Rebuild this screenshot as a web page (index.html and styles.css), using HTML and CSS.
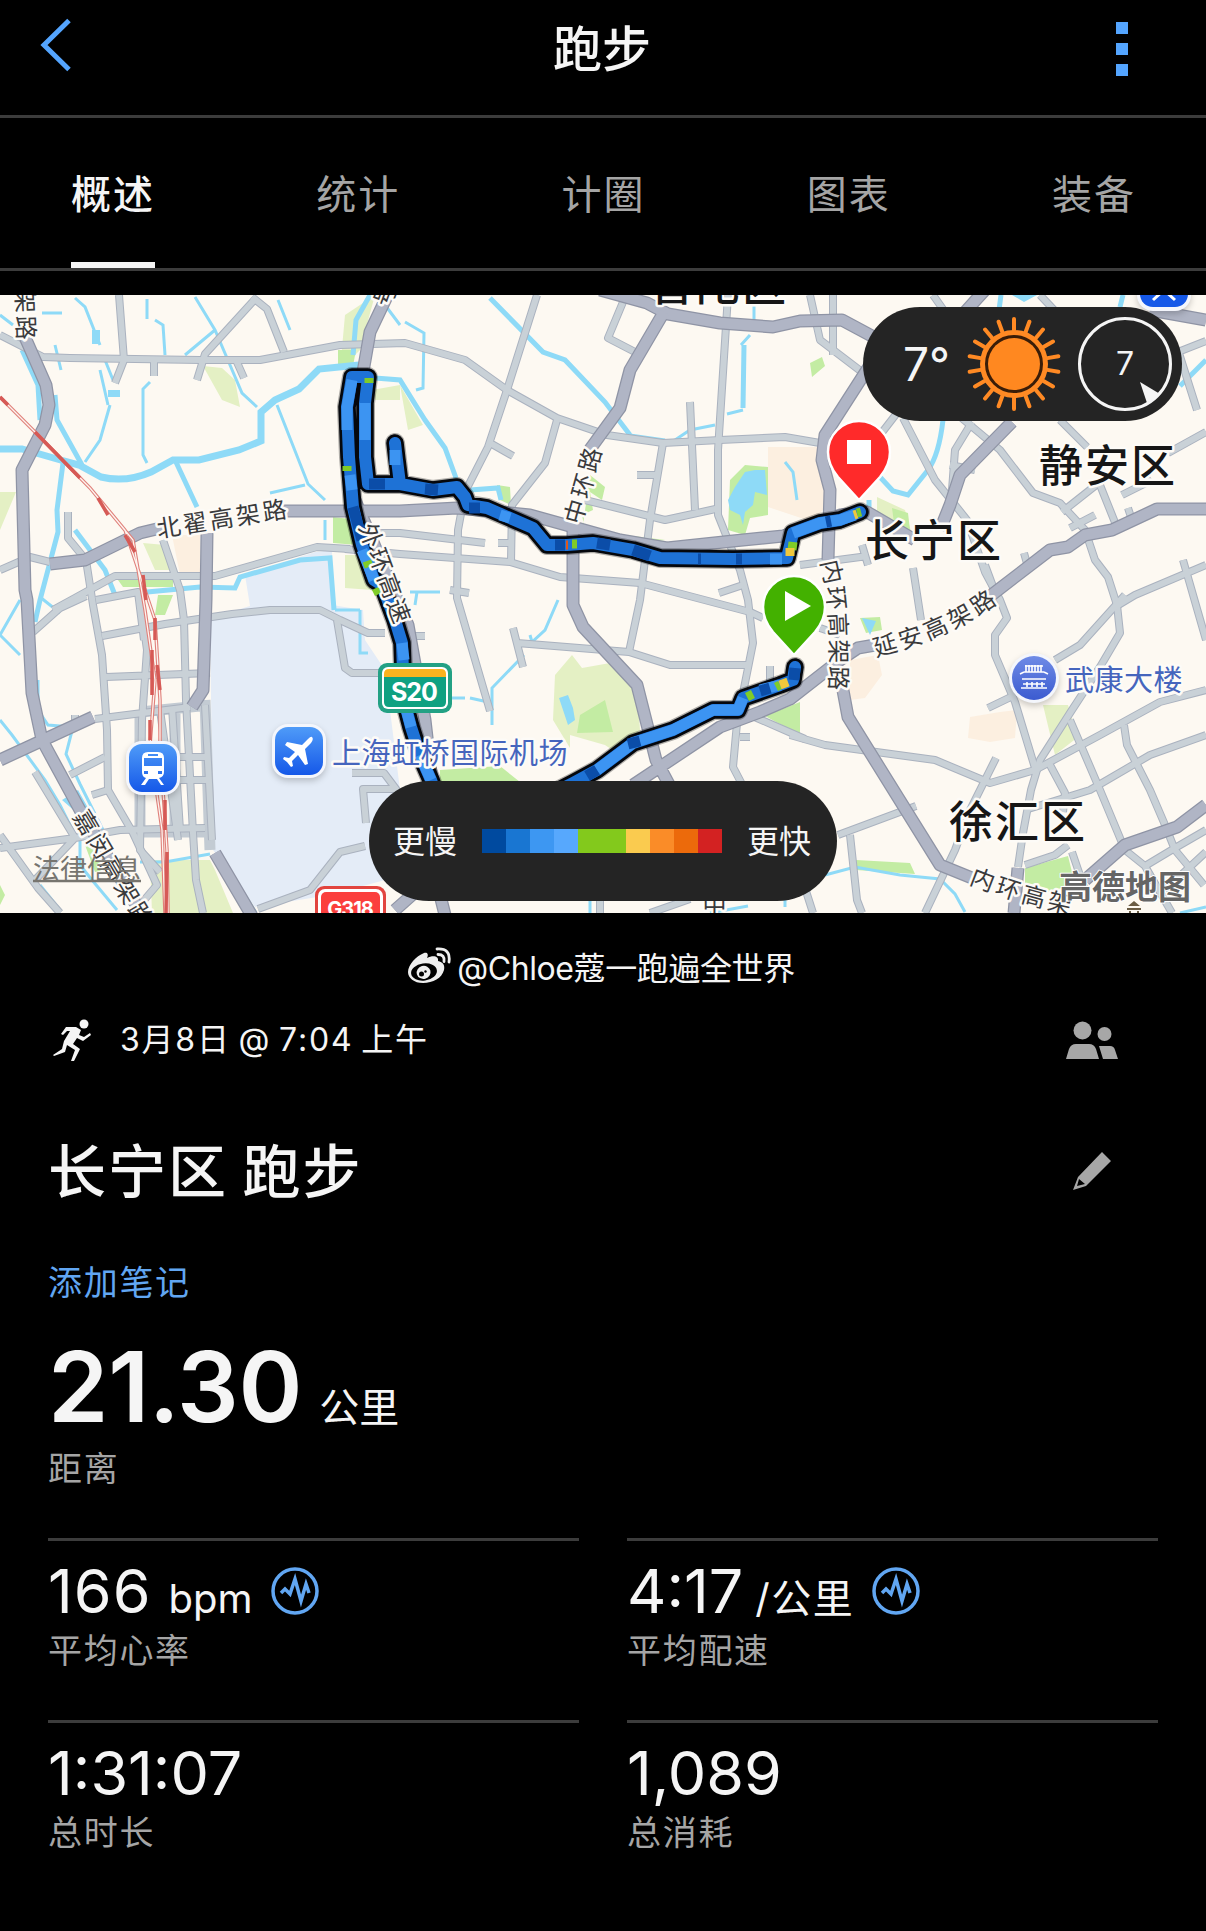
FILE: index.html
```html
<!DOCTYPE html>
<html lang="zh-CN">
<head>
    <meta charset="UTF-8">
    <meta name="viewport" content="width=device-width, initial-scale=1.0">
    <title>跑步</title>
    <link rel="stylesheet" href="styles.css">
</head>
<body>
    <header class="header">
        <svg class="back" width="32" height="54" viewBox="0 0 32 54"><path d="M29 2.500 4 27l25 24.500"/></svg>
        <h1>跑步</h1>
        <div class="more"><i></i><i></i><i></i></div>
    </header>

    <nav class="tabs">
        <a class="tab active">概述</a>
        <a class="tab">统计</a>
        <a class="tab">计圈</a>
        <a class="tab">图表</a>
        <a class="tab">装备</a>
    </nav>

    <section class="map">
        <svg class="map-canvas" viewBox="0 295 1206 618" width="1206" height="618">
            <defs>
                <linearGradient id="poi-blue" x1="0" y1="0" x2="0" y2="1">
                    <stop offset="0" stop-color="#4f9bf8"/>
                    <stop offset="1" stop-color="#1558e8"/>
                </linearGradient>
                <linearGradient id="poi-violet" x1="0" y1="0" x2="0" y2="1">
                    <stop offset="0" stop-color="#6f8be6"/>
                    <stop offset="1" stop-color="#3b5bd0"/>
                </linearGradient>
                <g id="minor-roads">
                    <path d="M0 335 43 357 70 358 200 360 260 360 340 345 405 343 465 360 507 390 557 418 607 435 663 443 720 440 785 437 820 443"/>
                    <path d="M119 295 124 360 115 383M154 360v16M257 297 205 354 197 380M252 297 267 309 284 352M236 360 244 378"/>
                    <path d="M68 512V538L86 560 93 605 102 655 107 730 108 790 133 833 157 885 140 905M0 570 30 557 50 562"/>
                    <path d="M53 610 75 598 115 576H215L317 547 350 549M163 540 180 590 184 620 186 700 193 833 196 880 203 913M96 600 138 592 144 640"/>
                    <path d="M33 632 60 608 86 596M102 636 165 624 232 614 270 610H320L340 620 368 633 385 633"/>
                    <path d="M140 600 147 650 142 720 140 850 160 872M106 677 210 673M95 719 190 707M337 620 345 668 352 673H385"/>
                    <path d="M0 848 75 838 120 830 205 828M35 772 75 838 35 880M0 835 38 888 60 913M70 775 105 757M92 795 108 790M75 715v12"/>
                    <path d="M160 710 178 840M172 707 180 830M205 705 212 840M180 757h30M180 780h30M258 909 310 890 340 852 365 846M352 773h32l12 16h-33l3 34"/>
                    <path d="M360 533H400L485 543M498 543h12M345 549 400 554 510 562 560 577 640 583 750 612 763 618"/>
                    <path d="M537 295 507 390 488 447 465 492 458 530 457 598 490 711M490 443 513 456M557 420 545 463 512 505 511 562"/>
                    <path d="M623 302 608 338 635 352M728 295 718 450V515L740 570 748 600 753 643 737 723 733 767 745 790M690 402 695 510"/>
                    <path d="M663 443 650 520 640 600 629 652M585 500 665 520 720 508M637 475h20M450 590 469 593M719 593 743 585"/>
                    <path d="M513 628 523 667M517 643 629 652 670 665H748M770 666v24M740 737h10M750 715 805 739M600 900v13M650 913 690 899M412 636h13"/>
                    <path d="M810 295 820 340 862 372M833 295V355M933 295 945 312M1040 295 1056 312M897 413 880 435M903 418 935 480 967 520 985 572 1000 600 1007 618 995 635V655L1015 702 1035 768"/>
                    <path d="M972 422 955 450 952 490M958 415 1000 450 1033 493 1060 503 1085 530 1095 560 1108 577 1117 605 1120 633 1100 667 1070 713 1040 760 1031 790 1023 833 1018 867"/>
                    <path d="M1060 420 1087 447M1125 595 1080 645 1055 660M1115 607 1135 595 1206 565M1183 560 1206 640M1168 453 1206 432M1062 512 1105 478M1100 485 1116 525M1122 495 1152 480M1070 528 1095 515M1128 508l4 12"/>
                    <path d="M1178 350 1197 410M1178 352 1206 341M800 565 868 556M913 568 921 620M1024 553l4 14M950 465 975 470M862 545 868 565M985 565 998 600"/>
                    <path d="M790 735 825 745 935 760 990 783 1035 770 1100 735 1160 702 1206 690M996 758 980 790 970 810 955 850 925 913M1050 765 1065 793 1063 812"/>
                    <path d="M1025 810 1090 790 1150 755 1206 735M1070 720 1100 790 1125 850 1145 866M1124 725 1127 745 1150 790 1165 825 1175 850 1204 885M1145 866 1175 848 1206 830M1206 852 1165 890M1145 866 1172 913"/>
                    <path d="M1025 865 1055 855 1068 845M1072 852 1085 890M838 835 916 806M850 835 857 900 862 913M805 888 813 913M988 708 1015 695M820 628 840 635"/>
                </g>
                <g id="major-roads">
                    <path d="M24 335 46 385 49 405 45 425 22 470 25 590 27 600 32 693 42 740 80 810 148 925M0 760 93 717"/>
                    <path d="M50 564 85 560 140 533 165 527M280 511H400L457 508 530 515 620 540 667 548 733 541 783 536 840 515 867 512 915 540M207 533 206 600 203 690 192 707"/>
                    <path d="M390 290 370 332 363 372M355 500 385 570 408 625 425 720 433 790M600 290 647 303 668 314 720 323 773 327 800 321 842 320 870 335 905 358"/>
                    <path d="M664 312 630 370 620 408 588 452M573 522V605L583 627 637 685 656 760 672 790M633 785 720 727 760 712 790 699 840 660 858 648 875 645M985 600 1050 550 1068 547 1085 535 1112 530 1157 509 1206 509"/>
                    <path d="M985 290 965 312M870 365 825 435 822 460 830 490 828 560M842 685 848 717 940 865 972 878M1018 868 1014 913M1085 880 1125 845 1177 827 1206 805M1012 422 960 475 950 505 940 530M215 853 252 916M1150 310 1206 320M395 910 412 895M440 895 445 915"/>
                </g>
                <path id="route-line" d="M438 800 431 780 420 755 411 727 404 700 402 643 395 620 382 585 374 580 362 545 353 507 349 457 347 407 352 377 368 377 365 403 365 457 368 484 400 484 433 490 457 487 465 497 468 505 487 508 533 528 547 545 567 545 593 543 633 550 660 558 733 559 787 558 793 533 820 523 840 520 860 512M400 484 397 460 395 443M795 667 793 680 780 685 743 698 738 710 713 710 673 730 633 743 597 770 573 783 540 800"/>
                <path id="rail-lines" d="M0 397 35 432 90 488 133 540 145 610 155 680 150 745 162 830 165 913M35 432 90 488 125 530 140 575 155 620 160 700 160 745 167 850 168 913"/>
                <path id="label-zhonghuan" d="M572 523 594 445"/>
                <path id="label-waihuan" d="M367 524 410 640"/>
                <path id="label-neihuan" d="M829 560Q842 600 838 700"/>
                <path id="label-yanan" d="M873 648Q950 630 1002 588"/>
                <path id="label-jiamin" d="M80 812 153 935"/>
                <path id="label-neihuan-south" d="M972 875Q1020 895 1080 907"/>
                <path id="label-left" d="M24 260 27 352"/>
            </defs>

            <rect class="land" y="295" width="1206" height="618"/>

            <!-- 机场与街区 -->
            <path class="airport" d="M245 575 315 552 332 550 332 605 363 610 365 640 385 670 400 790 385 880 330 895 255 907 213 850 210 618 250 606Z"/>
            <path class="sand" d="M172 535h28v40h-20ZM768 447h55l10 50-20 25-45-15ZM970 717 1000 712 1017 710 1015 738 990 742 968 738ZM850 660 878 655 882 675 865 698 850 700Z"/>
            <path class="meadow" d="M345 315 375 295 360 350 340 370ZM203 366 222 368 235 380 240 407 222 400ZM0 492 16 492 0 530ZM143 543 165 545 174 570 155 570ZM345 555 365 555 372 590 345 588ZM400 385 423 425 408 430ZM372 390 400 385V400H375ZM555 675 572 655 582 668 610 663 637 690 640 730 620 755 605 745 570 735 570 748 553 720ZM877 497 905 510 912 535 877 530ZM1043 705 1068 705 1078 737 1055 755ZM150 860 210 860 215 870 233 913H152Z"/>
            <path class="grass" d="M338 350h18l-3 16h-15ZM333 517 350 519 357 545 333 543ZM118 580h55v7h-50ZM158 595h15l-8 20h-10ZM590 475 605 487 602 500 590 492 593 510 582 515 585 530 665 540 640 543 582 532ZM730 480 745 465 768 467 768 515 750 518 745 535 728 530ZM580 715 605 700 613 732 577 733ZM765 716 800 702V735ZM810 363 822 357 825 366 812 377ZM1025 868 1068 856 1075 884 1048 892 1025 883ZM440 770 500 766 520 782H440ZM856 860 910 863 915 874 856 870ZM892 508 908 513 910 530 895 530ZM497 485 510 487 511 505 500 500ZM0 885 5 895 0 905ZM85 845 92 840 103 870 95 872ZM860 618 880 617 882 630 866 633Z"/>

            <!-- 河流 -->
            <g class="water">
                <path class="w8" d="M0 449h22l35 10 22 6 22 12q25 6 50-5l22-12h26l40-10 22-9V412l14-12 24-11 20-20 40-4"/>
                <path class="w5" d="M175 460 197 507M63 463 57 510 58 532 40 600 35 622M55 395 57 420 82 465M75 530 105 570 115 595 200 587 235 588 240 577 300 560 330 558 334 610M22 350 38 385 40 420M370 295 356 320 353 355M375 378 400 380 425 420 445 448 456 478"/>
                <path class="w3" d="M75 298 85 307 100 345M147 299v20M155 320l8 5 2 30M42 313h20M0 315 13 325M195 297 215 330 230 365 242 393 257 407M215 330 185 355M278 300 290 330M110 405 100 440 85 462M150 382l-7 7v66l4 8M105 360l8 20M277 405 308 484 325 500M270 493l35-8M55 345l6 25M325 520v20M40 597 60 613M0 635 20 655M100 370l8 35M385 305l15 20"/>
                <path class="w5" d="M490 298 543 352 565 360 605 402 630 435M470 490l28-2 3 12M744 345 743 408M1206 360 1180 386M943 420q-4 35-15 50l-20 25-15-4-13-14M869 500v12M1001 295l-2 15M1123 295l-3 12M220 857 255 913"/>
                <path class="w3" d="M405 322 424 333 423 388 416 390M750 335 741 345M743 410 727 414M715 425 690 430 675 440M754 300v25M630 435 665 440M558 600 545 630 532 642 530 635M524 655 492 688V725M450 698h15M470 698l18 4M410 592h30M417 592 415 605M360 610h-25M360 610v43h8M785 462l8 10 4 28M20 600 0 635M0 720 12 735 45 780 60 805 75 835M38 680v30l10 15 25 2-7 27 14 30 25 50M40 885 60 910M80 840v25l12 15 25 30M140 862h25l45-8M825 875l30-8 45 8 40 4 15 15 10 18M590 900v13M710 913l38-7M785 895v12M1180 913l26-6"/>
                <path class="lake" d="M728 500 735 487 745 472 755 470 765 470 767 495 755 492 753 505 745 512 743 525 740 515 730 510ZM559 698 568 695 573 708 575 720 568 725ZM92 330h8v14h-8ZM108 390h12v7h-12ZM862 618 876 621 870 635ZM1012 295h25l-13 7ZM62 800 78 790 92 815 85 820Z"/>
            </g>

            <path class="plaza" d="M140 710v125M175 712v118M205 700l5 150M140 712l60-6M135 832h75"/>
            <use href="#minor-roads" class="road minor-edge"/>
            <use href="#minor-roads" class="road minor"/>
            <use href="#major-roads" class="road major-edge"/>
            <use href="#major-roads" class="road major"/>

            <!-- 铁路 -->
            <use href="#rail-lines" class="rail"/>
            <use href="#rail-lines" class="rail-inner"/>
            <path class="rail-dash" d="M0 397 8 405M35 432 80 478M98 498 108 515M125 535 135 552M143 575 146 600M155 618V640M157 665 160 690M152 650 152 695M150 720V740M165 800V830M167 852 166 913"/>

            <!-- 轨迹 -->
            <use href="#route-line" class="route-shadow"/>
            <use href="#route-line" class="route-edge"/>
            <use href="#route-line" class="route"/>
            <g class="route-light">
                <path d="M431 780 420 755M402 643 404 660M347 430 347 407 352 380M365 403V440M374 580 362 550M395 465V450M350 475 352 490M411 727 405 705M500 515 510 518M793 533 820 523 840 520 855 515M770 559h12M743 698 738 710 713 710 673 730 633 743 597 770M760 690 780 685"/>
            </g>
            <g class="route-dark">
                <path d="M369 484 385 484M425 489 438 490M469 508 480 508M362 540 353 507M633 550 650 556M555 545 565 545M597 543 610 545M698 559 701 559M736 559 742 559M826 522 831 521M760 691 770 688M795 668 794 680M587 776 597 770M628 744 640 741"/>
            </g>
            <path class="seg-green" d="M347 466v5M369 378v5M367 561l2 6M376 588l3 6M747 697 753 694M776 687 780 685M857 513 861 512M572 544 577 544M792 550 793 542"/>
            <path class="seg-yellow" d="M780 685 788 682M790 556V548M854 515l3-1"/>
            <path class="seg-red" d="M566 545h2"/>

            <!-- 道路名 -->
            <g class="road-name">
                <text x="223" y="519" transform="rotate(-9 222 519)" text-anchor="middle">北翟高架路</text>
                <text><textPath href="#label-zhonghuan">中环路</textPath></text>
                <text><textPath href="#label-waihuan">外环高速</textPath></text>
                <text><textPath href="#label-neihuan">内环高架路</textPath></text>
                <text><textPath href="#label-yanan">延安高架路</textPath></text>
                <text><textPath href="#label-jiamin">嘉闵高架路</textPath></text>
                <text><textPath href="#label-neihuan-south">内环高架</textPath></text>
                <text><textPath href="#label-left" startOffset="29">架路</textPath></text>
                <text x="386" y="293" transform="rotate(-70 386 293)" text-anchor="middle">号</text>
                <text x="716" y="905" text-anchor="middle">中</text>
            </g>
            <g class="district">
                <text x="650" y="285">普陀区</text>
                <text x="1039" y="466">静安区</text>
                <text x="865" y="541">长宁区</text>
                <text x="949" y="822">徐汇区</text>
            </g>

            <!-- 公路编号 -->
            <g class="shield">
                <rect x="378" y="663" width="74" height="50" rx="9" fill="#23a184"/>
                <rect x="382" y="667" width="66" height="42" rx="6" fill="#fff"/>
                <path d="M384 677v-3q0-5 5-5h52q5 0 5 5v3Z" fill="#fcb31f"/>
                <path d="M384 677h62v25q0 5-5 5h-52q-5 0-5-5Z" fill="#0fa181"/>
                <text x="414" y="692">S20</text>
                <rect x="315" y="886" width="71" height="50" rx="9" fill="#e2453f"/>
                <rect x="318" y="889" width="65" height="44" rx="7" fill="#fff"/>
                <rect x="321" y="892" width="59" height="40" rx="5" fill="#fb3f3d"/>
                <text x="350" y="909" class="small">G318</text>
            </g>

            <!-- 地点 -->
            <g class="poi">
                <rect x="126" y="741" width="54" height="54" rx="16" class="poi-edge"/>
                <rect x="129" y="744" width="48" height="48" rx="13" fill="url(#poi-blue)"/>
                <path fill="#fff" fill-rule="evenodd" d="M148 752h10q6 0 6 6v14q0 5-5 6l5 7h-3l-4-6h-8l-4 6h-4l5-7q-4-1-4-6v-14q0-6 6-6ZM148 754v2h10v-2ZM144 758v8h18v-8ZM144 771v3h4v-3ZM158 771v3h4v-3Z"/>
                <rect x="272" y="724" width="54" height="54" rx="16" class="poi-edge"/>
                <rect x="275" y="727" width="48" height="48" rx="13" fill="url(#poi-blue)"/>
                <path fill="#fff" d="M312 737q2 2-1 6l-6 6 3 15-3 1-7-10-6 6 1 5-2 1-4-5-4-3 1-2 5 1 6-6-10-7 2-3 15 3 6-6q3-3 4-2Z"/>
                <text x="332" y="753">上海虹桥国际机场</text>
                <circle cx="1034" cy="678" r="25" class="poi-edge"/>
                <circle cx="1034" cy="678" r="22" fill="url(#poi-violet)"/>
                <path fill="none" stroke="#fff" stroke-width="1.6" d="M1025 666h18M1024 672h20M1020 674l4-2M1048 674l-4-2M1022 679h24M1021 688h26M1026 665v7M1029 665v7M1032 665v7M1035 665v7M1038 665v7M1041 665v7M1027 682v5M1032 682v5M1037 682v5M1042 682v5M1023 684h22"/>
                <text x="1065" y="680">武康大楼</text>
                <rect x="1137" y="260" width="54" height="51" rx="16" class="poi-edge"/>
                <rect x="1140" y="260" width="48" height="47" rx="13" fill="#1558e8"/>
                <path fill="none" stroke="#fff" stroke-width="3" d="M1153 300 1164 290 1175 300"/>
                <path fill="#6b5d45" d="M1134 901l6 5h-12ZM1127 908h14v2h-14ZM1129 911h2v2h-2ZM1137 911h2v2h-2Z"/>
            </g>
            <g class="legal">
                <text x="33" y="869">法律信息</text>
                <path d="M33 881h108" stroke="#77756f" stroke-width="2.500"/>
                <text x="1059" y="887" class="amap">高德地图</text>
            </g>

            <!-- 起点与终点 -->
            <path class="pin" fill="#ff2a2a" d="M859 500 838 477C832 470 828 461 828 452a31 31 0 0 1 62 0c0 9-4 18-10 25Z"/>
            <rect x="847" y="440" width="24" height="24" fill="#fff"/>
            <path class="pin" fill="#43b100" d="M794 655 773 632C767 625 763 616 763 607a31 31 0 0 1 62 0c0 9-4 18-10 25Z"/>
            <path fill="#fff" d="M785 591v30l26-15Z"/>
        </svg>

        <div class="weather">
            <span class="temp">7°</span>
            <svg class="sun" width="94" height="94" viewBox="-47 -47 94 94">
                <circle r="31.500" fill="#3a1d08" stroke="#ff8a24" stroke-width="5"/>
                <circle r="26" fill="#ff8820"/>
                <g class="rays">
                    <path id="ray" d="M0-34V-45M0 34V45"/>
                    <use href="#ray" transform="rotate(20)"/>
                    <use href="#ray" transform="rotate(40)"/>
                    <use href="#ray" transform="rotate(60)"/>
                    <use href="#ray" transform="rotate(80)"/>
                    <use href="#ray" transform="rotate(100)"/>
                    <use href="#ray" transform="rotate(120)"/>
                    <use href="#ray" transform="rotate(140)"/>
                    <use href="#ray" transform="rotate(160)"/>
                </g>
            </svg>
            <div class="wind">
                <svg width="96" height="96" viewBox="-48 -48 96 96">
                    <circle r="45.500" fill="none" stroke="#f5f5f5" stroke-width="3"/>
                    <path d="M15 18 35 30 22 39Z" fill="#f5f5f5"/>
                </svg>
                <span>7</span>
            </div>
        </div>

        <div class="legend">
            <span>更慢</span>
            <div class="scale"><i class="s1"></i><i class="s2"></i><i class="s3"></i><i class="s4"></i><i class="s5"></i><i class="s5"></i><i class="s6"></i><i class="s7"></i><i class="s8"></i><i class="s9"></i></div>
            <span>更快</span>
        </div>
    </section>

    <main class="content">
        <div class="credit">
            <svg width="44" height="37" viewBox="0 0 44 37">
                <path fill="#eee" d="M16 6c3-1 5 1 3 5 6-3 12-2 11 3 5 1 7 4 6 9-2 8-11 13-21 13C6 36 0 31 0 25 0 18 8 9 16 6Z"/>
                <ellipse cx="16" cy="25" rx="13" ry="8.500" fill="#000" transform="rotate(-8 16 25)"/>
                <ellipse cx="15.500" cy="25.500" rx="7" ry="6.500" fill="#eee" transform="rotate(-15 15 25)"/>
                <circle cx="13.500" cy="27" r="2.500"/><circle cx="17.500" cy="24.500" r="1.200"/>
                <path fill="none" stroke="#eee" stroke-width="2.800" stroke-linecap="round" d="M29 2q14-1 12 13M30 7.500q7 0 6 7"/>
            </svg>
            <span>@Chloe蔻一跑遍全世界</span>
        </div>

        <div class="row meta">
            <svg width="40" height="42" viewBox="0 0 40 42">
                <circle cx="31" cy="5" r="4.500" fill="#f5f5f5"/>
                <path fill="#f5f5f5" d="M14 8h9l5 3-2 5 5 2 6-4 1 2-8 6-6-3-4 6 7 5-6 12h-3l4-11-8-5-2 7-11 4-1-1 9-6 2-8 6-10h-3l-4 4-2-1 5-7Z"/>
            </svg>
            <span class="date">3月8日 @ 7:04 上午</span>
            <svg class="right people" width="52" height="39" viewBox="0 0 52 39">
                <circle cx="16.500" cy="9.500" r="9"/><circle cx="38.500" cy="13" r="7"/>
                <path d="M0 38 3 28q2-5 7-5h13q5 0 7 5l3 10ZM33 25h11q4 0 5 4l3 9H37Z"/>
            </svg>
        </div>

        <div class="row title">
            <h2>长宁区 跑步</h2>
            <svg class="right" width="39" height="39" viewBox="0 0 39 39">
                <path fill="#a7a7a7" fill-rule="evenodd" d="M29 0 38 9 13 34 0 38 5 25ZM6 27 4 34 12 32Z"/>
            </svg>
        </div>

        <a class="note">添加笔记</a>

        <div class="distance">
            <div class="value"><b>21.30</b><span class="unit">公里</span></div>
            <div class="label">距离</div>
        </div>

        <div class="stats">
            <div class="stat">
                <div class="value"><span class="heart">166</span><span class="unit">bpm</span>
                    <svg class="wave" width="48" height="48" viewBox="0 0 48 48"><circle cx="24" cy="24" r="22"/><path d="M10 26l4-4 5 5 5-15 6 22 5-17 3 9"/></svg>
                </div>
                <div class="label">平均心率</div>
            </div>
            <div class="stat">
                <div class="value">4:17<span class="unit slash">/公里</span>
                    <svg class="wave" width="48" height="48" viewBox="0 0 48 48"><circle cx="24" cy="24" r="22"/><path d="M10 26l4-4 5 5 5-15 6 22 5-17 3 9"/></svg>
                </div>
                <div class="label">平均配速</div>
            </div>
            <div class="stat">
                <div class="value">1:31:07</div>
                <div class="label">总时长</div>
            </div>
            <div class="stat">
                <div class="value">1,089</div>
                <div class="label">总消耗</div>
            </div>
        </div>
    </main>
</body>
</html>
```

FILE: styles.css
```css
* {
    margin: 0;
    padding: 0;
    box-sizing: border-box;
}

body {
    width: 1206px;
    height: 1931px;
    overflow: hidden;
    background-color: #000;
    color: #f5f5f5;
    font-family: Inter, "Noto Sans CJK SC", sans-serif;
}

svg {
    display: block;
    flex: none;
}

/* 顶部 */
.header {
    display: flex;
    justify-content: space-between;
    align-items: flex-start;
    height: 118px;
    padding: 18px 78px 0 40px;
    border-bottom: 3px solid #3c3c3c;
}

.back path {
    fill: none;
    stroke: #54a5ff;
    stroke-width: 5;
}

.header h1 {
    padding-left: 16px;
    font-size: 49px;
    font-weight: 500;
    line-height: 64px;
}

.more {
    display: flex;
    flex-direction: column;
    gap: 9px;
    padding-top: 4px;
}

.more i {
    width: 12px;
    height: 12px;
    background-color: #54a5ff;
}

.tabs {
    display: flex;
    justify-content: space-between;
    height: 153px;
    padding: 0 70px 0 71px;
    border-bottom: 3px solid #3c3c3c;
}

.tab {
    height: 150px;
    font-size: 40px;
    line-height: 153px;
    letter-spacing: 2px;
    color: #a5a5a5;
}

.tab.active {
    color: #f5f5f5;
    font-weight: 500;
    border-bottom: 6px solid #f5f5f5;
}

/* 地图 */
.map {
    position: relative;
    height: 618px;
    margin-top: 24px;
    overflow: hidden;
}

.land { fill: #fdf9f2; }
.airport { fill: #e4ecf7; }
.sand { fill: #fcefe0; }
.meadow { fill: #e4f0c4; }
.grass { fill: #c3eca3; }

.water {
    fill: none;
    stroke: #8edaf7;
}

.water .lake {
    fill: #8edaf7;
    stroke: none;
}

.w8 { stroke-width: 7; }
.w5 { stroke-width: 5; }
.w3 { stroke-width: 3; }

.plaza {
    fill: none;
    stroke: #c3cbd3;
    stroke-width: 11;
}

.road {
    fill: none;
    stroke-linejoin: round;
}

.minor-edge { stroke: #aab2bf; stroke-width: 8; }
.minor { stroke: #c9d1d7; stroke-width: 6; }
.major-edge { stroke: #8f94a5; stroke-width: 13; }
.major { stroke: #b0b5c5; stroke-width: 10.5; }

.rail,
.rail-inner,
.rail-dash {
    fill: none;
    stroke: #e0807a;
    stroke-width: 3.5;
}

.rail-inner {
    stroke: #fdf4f0;
    stroke-width: 1.3;
}

.rail-dash {
    stroke: #d65a56;
}

.route-shadow,
.route-edge,
.route,
.route-light,
.route-dark {
    fill: none;
    stroke-linecap: round;
    stroke-linejoin: round;
}

.route-shadow { stroke: rgba(0, 0, 0, 0.3); stroke-width: 20; }
.route-edge { stroke: #05070c; stroke-width: 17.5; }
.route { stroke: #1e72d6; stroke-width: 12; }
.route-light { stroke: #3c94f2; stroke-width: 11; stroke-linecap: butt; }
.route-dark { stroke: #0b4da8; stroke-width: 11; stroke-linecap: butt; }
.seg-green { stroke: #80cc28; stroke-width: 9; }
.seg-yellow { stroke: #f0c83c; stroke-width: 9; }
.seg-red { stroke: #e0561c; stroke-width: 9; }

.map-canvas text {
    font-family: Inter, "Noto Sans CJK SC", sans-serif;
    dominant-baseline: central;
    paint-order: stroke;
    stroke: #fdfbf7;
    stroke-width: 5;
    stroke-linejoin: round;
}

.map-canvas .road-name text {
    font-size: 24px;
    letter-spacing: 2.8px;
    fill: #3a3a3c;
}

.map-canvas .district text {
    font-size: 44px;
    font-weight: 500;
    letter-spacing: 2px;
    fill: #161616;
}

.map-canvas .shield text {
    font-size: 25px;
    font-weight: 700;
    letter-spacing: -1px;
    text-anchor: middle;
    fill: #fff;
    stroke: none;
}

.map-canvas .shield .small {
    font-size: 20px;
}

.map-canvas .poi text {
    font-size: 29px;
    letter-spacing: 0.5px;
    fill: #4565bd;
}

.poi-edge {
    fill: #f4f6fc;
    filter: drop-shadow(0 3px 3px rgba(0, 0, 0, 0.2));
}

.map-canvas .legal text {
    font-size: 27px;
    fill: #77756f;
    stroke: none;
}

.map-canvas .legal .amap {
    font-size: 33px;
    font-weight: 700;
    fill: #656565;
    stroke: #fff;
    stroke-width: 2;
}

.pin {
    stroke: #fff;
    stroke-width: 2.5;
}

.weather {
    position: absolute;
    top: 12px;
    right: 24px;
    display: flex;
    align-items: center;
    width: 319px;
    height: 114px;
    padding-left: 40px;
    border-radius: 57px;
    background-color: #242424;
}

.temp {
    width: 64px;
    font-size: 46px;
    line-height: 60px;
}

.wind {
    position: relative;
    margin-left: 16px;
}

.wind span {
    position: absolute;
    inset: 0;
    font-size: 32px;
    line-height: 96px;
    text-align: center;
}

.rays {
    stroke: #ff8a24;
    stroke-width: 4;
    stroke-linecap: round;
}

.legend {
    position: absolute;
    top: 486px;
    left: 369px;
    display: flex;
    justify-content: space-between;
    align-items: center;
    width: 468px;
    height: 120px;
    padding: 0 26px 0 24px;
    border-radius: 60px;
    background-color: #242424;
    font-size: 32px;
}

.legend span {
    padding-bottom: 4px;
}

.scale {
    display: flex;
}

.scale i {
    width: 24px;
    height: 24px;
}

.s1 { background-color: #004a9f; }
.s2 { background-color: #1976d2; }
.s3 { background-color: #3d97f2; }
.s4 { background-color: #57a8fd; }
.s5 { background-color: #83c91c; }
.s6 { background-color: #facb4f; }
.s7 { background-color: #fa8c28; }
.s8 { background-color: #ec6a0b; }
.s9 { background-color: #d32222; }

/* 活动信息 */
.content {
    padding: 29px 48px 0;
}

.credit {
    display: flex;
    justify-content: center;
    gap: 5px;
    height: 52px;
    padding: 5px 3px 0 0;
    font-size: 32px;
    line-height: 44px;
}

.credit span {
    letter-spacing: -0.4px;
}

.row {
    display: flex;
    align-items: center;
}

.right {
    margin-left: auto;
}

.meta {
    height: 92px;
    padding: 0 40px 0 5px;
}

.date {
    margin-left: 27px;
    padding-bottom: 7px;
    font-size: 32px;
    letter-spacing: 1.8px;
    word-spacing: -3px;
}

.people {
    fill: #a7a7a7;
}

.title {
    height: 170px;
    padding-right: 46px;
}

h2 {
    padding-bottom: 6px;
    font-size: 58px;
    font-weight: 500;
    letter-spacing: 2px;
    word-spacing: -3px;
}

.note {
    display: block;
    height: 50px;
    font-size: 34px;
    line-height: 54px;
    letter-spacing: 1.7px;
    color: #61a6f2;
}

.distance {
    height: 232px;
    padding-top: 25px;
}

.distance .value {
    height: 113px;
    line-height: 112px;
}

.distance b {
    font-size: 97px;
    font-weight: 600;
    letter-spacing: -0.3px;
}

.value {
    display: flex;
    align-items: baseline;
}

.unit {
    margin-left: 17px;
    font-size: 40px;
}

.slash {
    margin-left: 12px;
    letter-spacing: 1.5px;
}

.heart {
    letter-spacing: 1px;
}

.label {
    font-size: 34px;
    line-height: 50px;
    letter-spacing: 1.7px;
    color: #a5a5a5;
}

.stats {
    display: grid;
    grid-template-columns: 1fr 1fr;
    column-gap: 48px;
}

.stat {
    height: 182px;
    padding-top: 15px;
    border-top: 3px solid #3c3c3c;
}

.stat .value {
    height: 70px;
    font-size: 61px;
    line-height: 70px;
}

.wave {
    align-self: flex-start;
    margin: 11px 0 0 18px;
    fill: none;
    stroke: #61a6f2;
    stroke-width: 3.5;
}
```
